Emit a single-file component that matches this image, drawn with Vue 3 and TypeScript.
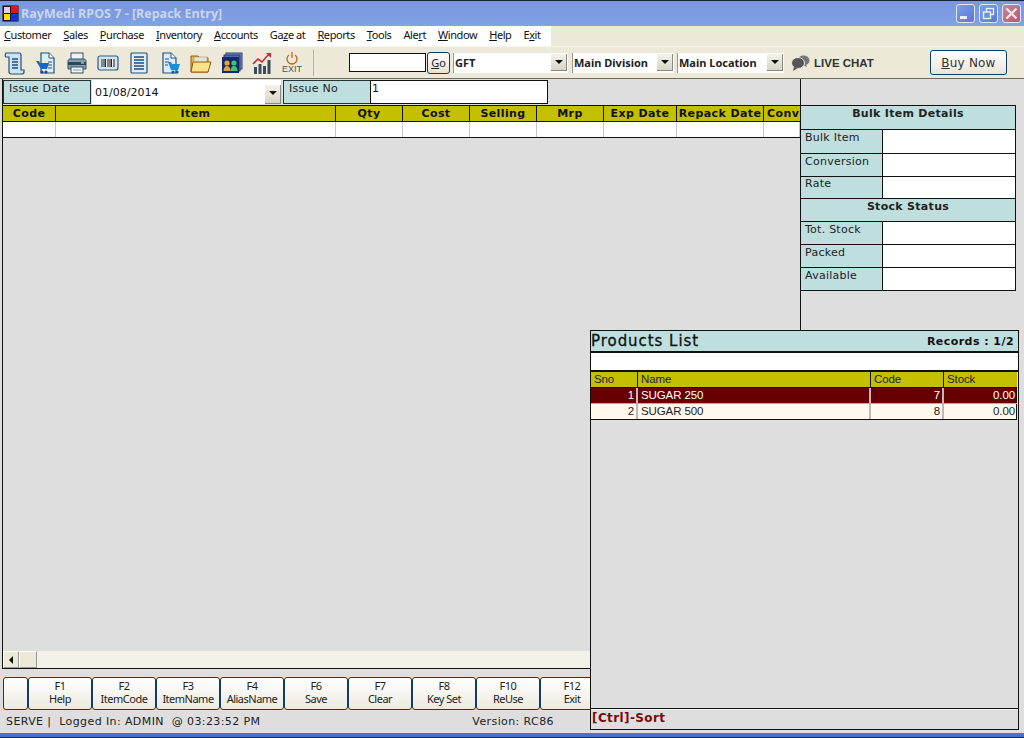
<script setup lang="ts">
const menus: string[][] = [
  ['', 'C', 'ustomer'], ['', 'S', 'ales'], ['', 'P', 'urchase'], ['', 'I', 'nventory'], ['', 'A', 'ccounts'],
  ['Ga', 'z', 'e at'], ['', 'R', 'eports'], ['', 'T', 'ools'], ['Ale', 'r', 't'], ['', 'W', 'indow'], ['', 'H', 'elp'], ['E', 'x', 'it'],
]
const cols = ['Code', 'Item', 'Qty', 'Cost', 'Selling', 'Mrp', 'Exp Date', 'Repack Date', 'Conv']
const bulk = ['Bulk Item', 'Conversion', 'Rate']
const stock = ['Tot. Stock', 'Packed', 'Available']
const keys = [['', ''], ['F1', 'Help'], ['F2', 'ItemCode'], ['F3', 'ItemName'], ['F4', 'AliasName'], ['F6', 'Save'], ['F7', 'Clear'], ['F8', 'Key Set'], ['F10', 'ReUse'], ['F12', 'Exit']]
const products = [
  { sno: 1, name: 'SUGAR 250', code: 7, stock: '0.00' },
  { sno: 2, name: 'SUGAR 500', code: 8, stock: '0.00' },
]
</script>

<template>
  <div class="win">
    <header class="title">
      <svg class="logo" width="17" height="17" viewBox="0 0 17 17">
        <rect x="0.5" y="0.5" width="16" height="16" fill="#111" />
        <rect x="2" y="2" width="6" height="6" fill="#d8d8d0" />
        <rect x="9" y="1" width="7" height="7" fill="#e8101c" />
        <rect x="2" y="9" width="6" height="6" fill="#f4e000" />
        <rect x="9" y="9" width="7" height="7" fill="#1030d0" />
      </svg>
      <span class="title-text">RayMedi RPOS 7 - [Repack Entry]</span>
      <span class="wbtn w1"><i class="min"></i></span>
      <span class="wbtn w2">
        <svg width="13" height="13" viewBox="0 0 13 13" fill="none" stroke="#e8eefc" stroke-width="1.4"><rect x="4.5" y="1.5" width="7" height="6" /><rect x="1.5" y="5" width="7" height="6.5" fill="#6d90e2" /></svg>
      </span>
      <span class="wbtn w3">
        <svg width="13" height="13" viewBox="0 0 13 13" stroke="#f4e4e8" stroke-width="2.4"><path d="M1.5 1.5 11.5 11.5M11.5 1.5 1.5 11.5" /></svg>
      </span>
    </header>

    <nav class="menubar">
      <div class="menus">
        <span v-for="m in menus" :key="m[0] + m[2]">{{ m[0] }}<u>{{ m[1] }}</u>{{ m[2] }}</span>
      </div>
    </nav>

    <div class="toolbar">
      <div class="icons">
        <svg width="22" height="24" viewBox="0 0 22 24"><path d="M2 2h13c1 0 2 1 2 2v15h3v2c0 1-1 2-2 2H7c-1 0-2-1-2-2V6H2C1 6 1 3 2 2Z" fill="#cfe2f2" stroke="#24507c" stroke-width="1.2" /><path d="M8 8h6M8 11h6M8 14h6M8 17h6" stroke="#1d4f80" stroke-width="1.6" /></svg>
        <svg width="22" height="24" viewBox="0 0 22 24"><path d="M6 2h8l5 5v15H6Z" fill="#dfecf7" stroke="#24507c" stroke-width="1.2" /><path d="M14 2v5h5" fill="#fff" stroke="#24507c" /><path d="M13 11h4M13 14h4M13 17h4" stroke="#24507c" /><path d="M1 10h3l1 2h9l-2 6H6Z" fill="#1668c8" /><circle cx="7" cy="21" r="1.6" fill="#0c4c9c" /><circle cx="11" cy="21" r="1.6" fill="#0c4c9c" /></svg>
        <svg width="22" height="24" viewBox="0 0 22 24"><rect x="5" y="2" width="12" height="7" fill="#eef2f6" stroke="#33506c" /><path d="M2 10c0-1 1-2 2-2h14c1 0 2 1 2 2v8H2Z" fill="#8c9cac" stroke="#33506c" /><rect x="2" y="11" width="18" height="3" fill="#27485f" /><rect x="15" y="11" width="3" height="2" fill="#4cc46c" /><rect x="5" y="16" width="12" height="6" fill="#f2f4f6" stroke="#33506c" /><path d="M7 19h8" stroke="#8c9cac" /></svg>
        <svg width="22" height="24" viewBox="0 0 22 24"><rect x="1" y="5" width="20" height="14" rx="2" fill="#d4e6f4" stroke="#2c5c88" stroke-width="1.2" /><rect x="4" y="8" width="14" height="8" fill="#fff" /><path d="M5 8v8M7 8v8M8.500 8v8M11 8v8M13 8v8M14.500 8v8M17 8v8" stroke="#222" stroke-width="1.1" /></svg>
        <svg width="22" height="24" viewBox="0 0 22 24"><rect x="3" y="2" width="16" height="20" rx="1" fill="#e0ecf7" stroke="#24507c" stroke-width="1.2" /><path d="M6 6h10M6 9h10M6 12h10M6 15h10M6 18h10" stroke="#1d4f80" stroke-width="1.5" /></svg>
        <svg width="22" height="24" viewBox="0 0 22 24"><path d="M4 2h8l5 5v15H4Z" fill="#dfecf7" stroke="#24507c" stroke-width="1.2" /><path d="M12 2v5h5" fill="#fff" stroke="#24507c" /><path d="M6 8h4M6 11h4M6 14h3" stroke="#24507c" /><path d="M9 11h3l1 2h8l-2 6h-7Z" fill="#1690d8" /><circle cx="14" cy="21" r="1.6" fill="#0c5ca8" /><circle cx="18" cy="21" r="1.6" fill="#0c5ca8" /></svg>
        <svg width="22" height="24" viewBox="0 0 22 24"><path d="M1 5h7l2 2h8v14H1Z" fill="#eeb44c" stroke="#8c5a10" /><rect x="4" y="6" width="13" height="7" fill="#e4e4dc" stroke="#99958a" stroke-width=".6" /><path d="M1 21 3 11h18l-3 10Z" fill="#fbe488" stroke="#8c5a10" /></svg>
        <svg width="22" height="24" viewBox="0 0 22 24"><rect x="5" y="2" width="16" height="16" fill="#7f93c4" stroke="#2c3c78" /><rect x="3" y="4" width="16" height="16" fill="#5468a8" stroke="#2c3c78" /><rect x="1" y="6" width="17" height="16" fill="#122a6c" /><circle cx="6" cy="12" r="2.6" fill="#eaa040" /><path d="M2.500 20c0-3 1.500-5 3.500-5s3.500 2 3.500 5Z" fill="#eaa040" /><circle cx="13" cy="12" r="2.600" fill="#40c080" /><path d="M9.500 20c0-3 1.500-5 3.500-5s3.500 2 3.500 5Z" fill="#40c080" /></svg>
        <svg width="22" height="24" viewBox="0 0 22 24"><path d="M2 16h3v7H2ZM6.500 13h3v10h-3ZM11 15h3v8h-3ZM15.500 9h3v14h-3Z" fill="#3c4c5c" /><path d="M1 13 6 8l4 3 7-8" fill="none" stroke="#c43030" stroke-width="1.6" /><path d="M14 2h5v5Z" fill="#c43030" /></svg>
        <div class="exit">
          <svg width="14" height="14" viewBox="0 0 14 14" fill="none" stroke="#c8641c" stroke-width="1.3"><path d="M4 4a5 5 0 1 0 6 0" /><path d="M7 1v6" /></svg>
          <span>EXIT</span>
        </div>
      </div>
      <i class="sep"></i>
      <input class="search" aria-label="Search" />
      <button class="go"><u>G</u>o</button>
      <div class="combo c1"><b>GFT</b><i class="arrow"></i></div>
      <div class="combo c2"><b>Main Division</b><i class="arrow"></i></div>
      <div class="combo c3"><b>Main Location</b><i class="arrow"></i></div>
      <svg class="chat" width="19" height="16" viewBox="0 0 19 16"><ellipse cx="12.500" cy="5.500" rx="6" ry="5" fill="#777" /><path d="M15 9l1 3-4-2Z" fill="#777" /><ellipse cx="7" cy="8" rx="6.500" ry="5.500" fill="#555" stroke="#ece9d8" /><path d="M3 12l-1 4 5-3Z" fill="#555" /></svg>
      <strong class="live">LIVE CHAT</strong>
      <button class="buy"><u>B</u>uy Now</button>
    </div>

    <main class="body">
      <section class="work">
        <div class="left">
          <div class="form">
            <label class="flabel l1">Issue Date</label>
            <div class="date"><span>01/08/2014</span><i class="arrow"></i></div>
            <label class="flabel l2">Issue No</label>
            <div class="no">1</div>
          </div>
          <div class="grid head">
            <span v-for="c in cols" :key="c">{{ c }}</span>
          </div>
          <div class="grid blank">
            <span v-for="c in cols" :key="c"></span>
          </div>
          <div class="fill"></div>
          <div class="hscroll">
            <span class="sarrow"><i></i></span>
            <span class="thumb"></span>
          </div>
        </div>
        <aside class="right">
          <div class="panel">
            <h3 class="phead h1">Bulk Item Details</h3>
            <div v-for="(b, i) in bulk" :key="b" class="prow" :class="'b' + i"><span>{{ b }}</span><i></i></div>
            <h3 class="phead h2">Stock Status</h3>
            <div v-for="(s, i) in stock" :key="s" class="prow" :class="'s' + i"><span>{{ s }}</span><i></i></div>
          </div>
        </aside>
      </section>
      <div class="keys">
        <button v-for="k in keys" :key="k[0]" class="key" :class="{ first: !k[0] }">{{ k[0] }}<br />{{ k[1] }}</button>
      </div>
      <footer class="status">
        <span class="st1">SERVE |&nbsp; Logged In: ADMIN&nbsp; @ 03:23:52 PM</span>
        <span class="st2">Version: RC86</span>
      </footer>

      <section class="products">
        <div class="ptitle"><h2>Products List</h2><b>Records : 1/2</b></div>
        <div class="psearch"></div>
        <div class="pgrid phd"><span>Sno</span><span>Name</span><span>Code</span><span>Stock</span></div>
        <div v-for="(p, i) in products" :key="p.sno" class="pgrid pr" :class="{ sel: i === 0 }">
          <span class="r">{{ p.sno }}</span><span>{{ p.name }}</span><span class="r">{{ p.code }}</span><span class="r">{{ p.stock }}</span>
        </div>
        <div class="pfill"></div>
        <div class="psort">[Ctrl]-Sort</div>
      </section>
    </main>
    <div class="bottom"></div>
  </div>
</template>

<style>
html, body { margin: 0; padding: 0; background: #dedede; }
</style>

<style scoped>
.win { position: relative; width: 1024px; height: 738px; overflow: hidden; display: flex; flex-direction: column; font-family: "DejaVu Sans", sans-serif; font-size: 11px; color: #111; background: #dedede; }
.title { height: 26px; flex: none; box-sizing: border-box; border-top: 1px solid #16233f; display: flex; align-items: center; padding: 0 3px 1px 2px; background: linear-gradient(#7a98df, #7d9ce1 60%, #82a3e6); }
.logo { flex: none; }
.title-text { margin-left: 2px; font: bold 12.5px "Open Sans", sans-serif; color: #c9d6f2; flex: 1; white-space: nowrap; }
.wbtn { width: 19px; height: 19px; margin-left: 4px; box-sizing: border-box; border: 1px solid #dfe8fa; border-radius: 3px; background: linear-gradient(135deg, #7d9fe8, #5578d8); display: flex; align-items: center; justify-content: center; }
.wbtn.w3 { background: linear-gradient(135deg, #c58a98, #b05a6c); }
.min { width: 7px; height: 3px; background: #e8eefc; margin: 8px 5px 0 0; }
.menubar { height: 20px; flex: none; background: #ece9d8; border-bottom: 1px solid #a7a598; box-sizing: content-box; }
.menus { width: 551px; height: 20px; box-sizing: border-box; background: #fff; display: flex; align-items: center; padding: 0 0 3px 4px; gap: 12px; font: 11px "Noto Sans", sans-serif; letter-spacing: -0.42px; white-space: nowrap; }
.toolbar { height: 31px; flex: none; background: #ece9d8; border-bottom: 1px solid #6d6a5c; display: flex; align-items: center; padding-left: 4px; border-top: 1px solid #f8f6ee; margin-top: -1px; }
.icons { display: flex; gap: 9px; align-items: center; width: 301px; }
.icons svg { flex: none; }
.exit { display: flex; flex-direction: column; align-items: center; margin-left: -1px; font: 9px "Liberation Sans", sans-serif; color: #555; line-height: 9px; }
.sep { width: 1px; height: 26px; background: #b5b2a4; margin: 0 35px 0 8px; flex: none; }
.search { width: 77px; height: 19px; box-sizing: border-box; border: 1px solid #111; background: #fff; padding: 0; outline: none; flex: none; }
.go { width: 23px; height: 22px; margin-left: 1px; padding: 0; box-sizing: border-box; border: 1px solid #0f3d68; border-radius: 3px; background: linear-gradient(#fff, #e6e3d6); font: 11px "Noto Sans", sans-serif; color: #222; flex: none; }
.combo { height: 20px; box-sizing: border-box; background: #fff; border-left: 1px solid #999; display: flex; align-items: center; justify-content: space-between; padding: 0 1px 0 1px; flex: none; font-size: 11px; }
.combo b { font: bold 11px "Noto Sans", sans-serif; color: #222; }
.c1 { width: 115px; margin-left: 3px; }
.c2 { width: 102px; margin-left: 4px; }
.c3 { width: 107px; margin-left: 3px; }
.arrow { width: 16px; height: 17px; flex: none; background: linear-gradient(#f4f2ea, #d8d5c6); border-right: 1px solid #888; border-bottom: 1px solid #888; position: relative; box-sizing: border-box; }
.arrow::after { content: ""; position: absolute; left: 4px; top: 6px; border: 4px solid transparent; border-top: 4px solid #111; border-bottom: 0; }
.chat { margin-left: 7px; flex: none; }
.live { margin-left: 4px; font: bold 11.5px "Liberation Sans", sans-serif; color: #333; width: 60px; white-space: nowrap; flex: none; }
.buy { margin-left: 56px; width: 77px; height: 25px; box-sizing: border-box; border: 1px solid #0f3d68; border-radius: 3px; background: linear-gradient(#fff, #e8e5d8); font: 12px "DejaVu Sans", sans-serif; letter-spacing: 0.2px; color: #333; padding: 0; flex: none; }
.body { position: relative; flex: 1; min-height: 0; display: flex; flex-direction: column; padding: 0 2px; background: #dedede; }
.work { height: 590px; flex: none; display: flex; box-sizing: border-box; }
.left { width: 798px; box-sizing: border-box; border-left: 1px solid #111; border-bottom: 1px solid #111; display: flex; flex-direction: column; flex: none; min-width: 0; }
.form { display: flex; height: 24px; margin: 1px 0 1px 0; flex: none; }
.flabel { box-sizing: border-box; height: 24px; background: #bfdfdf; border: 1px solid #26343a; padding: 1px 5px; letter-spacing: 0.25px; font-size: 11px; color: #222; }
.l1 { width: 88px; }
.l2 { width: 87px; margin-left: 2px; border-right: 0; }
.date { box-sizing: border-box; width: 189px; height: 24px; margin-left: 1px; background: #fff; display: flex; align-items: center; justify-content: space-between; padding: 0 0 0 3px; font-size: 11px; }
.date .arrow { height: 19px; align-self: flex-end; }
.no { box-sizing: border-box; width: 178px; height: 24px; background: #fff; border: 1px solid #111; padding: 1px 1px; }
.grid { display: grid; grid-template-columns: 53px 280px 67px 67px 67px 67px 73px 87px 36px; flex: none; }
.head { height: 17px; background: #c4c000; border-top: 1px solid #111; border-bottom: 1px solid #111; font-weight: bold; box-sizing: border-box; letter-spacing: 0.4px; }
.head span { text-align: center; line-height: 15px; border-right: 1px solid #111; white-space: nowrap; overflow: hidden; }
.head span:last-child { border-right: 0; text-align: left; padding-left: 3px; }
.blank { height: 16px; background: #fff; border-bottom: 1px solid #111; box-sizing: border-box; }
.blank span { border-right: 1px solid #c8c8c8; }
.fill { flex: 1; }
.hscroll { height: 17px; flex: none; display: flex; background: #f4f2e8; }
.sarrow, .thumb { box-sizing: border-box; height: 17px; background: #ece9d8; border: 1px solid #fff; border-right-color: #999; border-bottom-color: #999; flex: none; }
.sarrow { width: 16px; display: flex; align-items: center; justify-content: center; }
.sarrow i { border: 4px solid transparent; border-right: 4px solid #111; border-left: 0; }
.thumb { width: 18px; }
.right { flex: 1; border-left: 1px solid #111; padding-top: 26px; }
.panel { width: 215px; border: 1px solid #111; border-left: 0; background: #fff; box-sizing: border-box; }
.phead { margin: 0; background: #bfdfdf; font-size: 11px; font-weight: bold; text-align: center; color: #222; height: 23px; box-sizing: border-box; padding-top: 1px; letter-spacing: 0.3px; border-bottom: 1px solid #111; }
.h1 { height: 24px; }
.prow { display: flex; height: 23px; box-sizing: border-box; border-bottom: 1px solid #111; }
.b0 { height: 24px; }
.b2 { height: 22px; }
.s2 { height: 22px; border-bottom: 0; }
.prow span { width: 82px; box-sizing: border-box; background: #bfdfdf; border-right: 1px solid #111; padding: 1px 4px; color: #222; letter-spacing: 0.25px; flex: none; }
.b2 span { padding-top: 0; }
.keys { display: flex; height: 33px; margin-top: 8px; padding-left: 1px; flex: none; }
.key { width: 64px; height: 33px; box-sizing: border-box; padding: 0 0 4px; border: 1px solid #0f3d68; border-radius: 3px; background: linear-gradient(#fff, #eceae0); font: 11px/13px "Noto Sans", sans-serif; letter-spacing: -0.5px; color: #222; flex: none; }
.key.first { width: 25px; }
.status { height: 24px; box-sizing: border-box; padding: 0 0 2px 4px; flex: none; position: relative; display: flex; align-items: center; font-size: 11px; color: #222; letter-spacing: 0.4px; }
.st2 { margin-left: auto; margin-right: 468px; }
.products { position: absolute; left: 590px; top: 251px; width: 429px; height: 400px; box-sizing: border-box; background: #dedede; border: 1px solid #111; display: flex; flex-direction: column; }
.ptitle { height: 20px; flex: none; background: #bfdfdf; display: flex; align-items: center; justify-content: space-between; padding: 0 4px 0 0; border-bottom: 2px solid #111; box-sizing: content-box; }
.ptitle h2 { margin: 0; font-size: 15px; font-weight: normal; color: #111; letter-spacing: 0.95px; -webkit-text-stroke: 0.3px #111; }
.ptitle b { font-size: 11px; letter-spacing: 0.45px; }
.psearch { height: 17px; flex: none; background: #fff; border-bottom: 2px solid #111; }
.pgrid { display: grid; grid-template-columns: 47px 233px 73px 73px; flex: none; font: 11.5px "Liberation Sans", sans-serif; letter-spacing: -0.1px; width: 426px; box-sizing: border-box; }
.phd { height: 16px; background: #c4c000; color: #222; line-height: 15px; border-bottom: 1px solid #111; }
.phd span { padding-left: 3px; border-right: 1px solid #111; }
.phd span:last-child { border-right: 0; }
.pr { height: 16px; line-height: 15px; background: #fff8ec; border-bottom: 1px solid #111; color: #222; }
.pr.sel { background: #660000; color: #fff; border-bottom-color: #aaa; }
.pr span { padding: 0 2px 0 3px; border-right: 2px solid #bbb; white-space: nowrap; }
.pr span:last-child { border-right: 1px solid #111; padding-right: 1px; }
.r { text-align: right; }
.pfill { flex: 1; }
.psort { height: 21px; box-sizing: border-box; flex: none; border-top: 1px solid #111; font-weight: bold; font-size: 12px; color: #7a0a0a; padding: 2px 1px; letter-spacing: 0.4px; background: #dedede; box-shadow: inset 0 1px 0 #f4f4f4; }
.bottom { height: 5px; box-sizing: border-box; flex: none; background: linear-gradient(#3c78dc, #3a70d0); border-bottom: 1px solid #1a2a50; }
</style>
